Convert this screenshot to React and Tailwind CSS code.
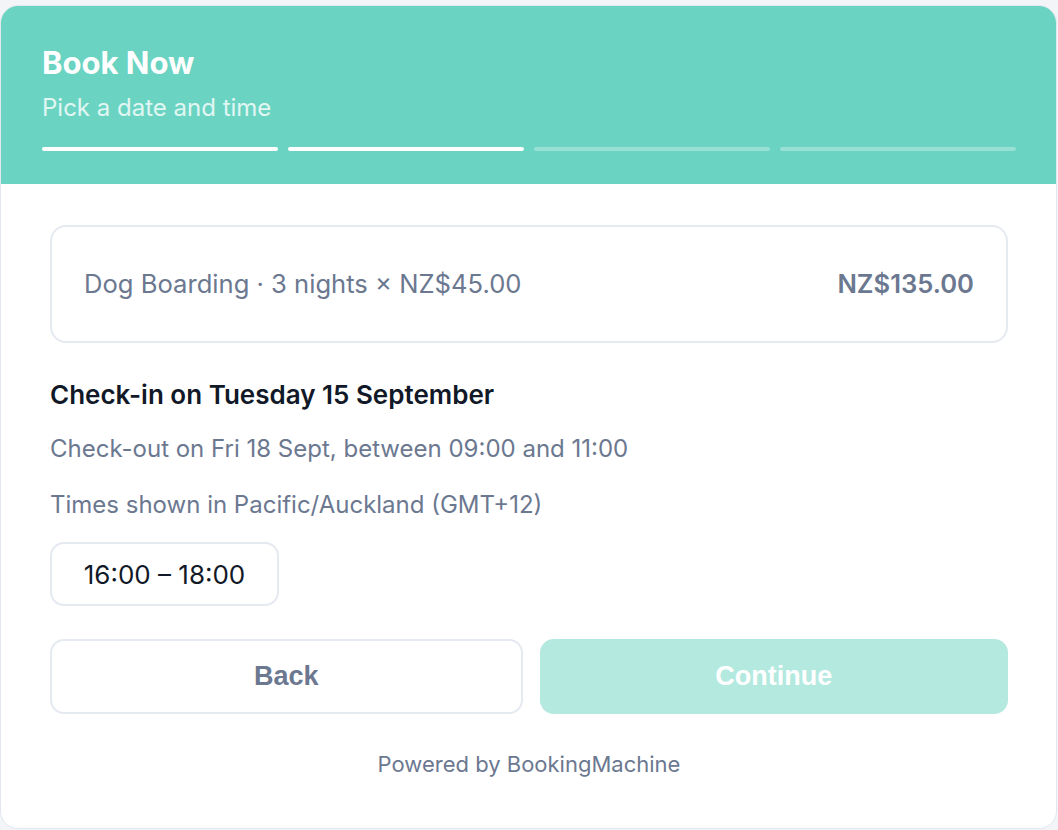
import React from 'react';

const inter = { fontFamily: 'Inter, "Noto Sans", sans-serif' };

function Steps({ done, total }) {
    // progress bars under the header
    const bars = [];
    for (let i = 0; i < total; i++) {
        bars.push(
            <div key={i} className={i < done ? "h-[4px] flex-1 rounded-full bg-white" : "h-[4px] flex-1 rounded-full bg-white/30"} />
        );
    }
    return <div className="mt-[24px] flex gap-[10px]">{bars}</div>;
}

export default function App() {
    return (
        <div className="min-h-screen bg-[#f3f4f7] pt-[5px]" style={inter}>
            <div className="w-[1057px] overflow-hidden rounded-[18px] border border-[#e3e7ee] bg-white">
                {/* header */}
                <div className="bg-[#6ad3c1] pl-[41px] pr-[40px] pt-[39px] pb-[33px]">
                    <h1 className="text-[31px] font-bold leading-[36px] text-white">Book Now</h1>
                    <p className="mt-[12px] text-[24px] leading-[30px] text-white/80">Pick a date and time</p>
                    <Steps done={2} total={4} />
                </div>

                {/* body */}
                <div className="pl-[49px] pr-[48px] pt-[41px] pb-[50px]">
                    <div className="flex h-[118px] items-center justify-between rounded-[16px] border-2 border-[#e5e9f0] px-[32px] text-[25.6px] text-[#6b7890]">
                        <span>Dog Boarding · 3 nights × NZ$45.00</span>
                        <span className="font-semibold">NZ$135.00</span>
                    </div>

                    <h2 className="mt-[36px] text-[26px] font-semibold leading-[32px] text-[#111827]">Check-in on Tuesday 15 September</h2>
                    <p className="mt-[23px] text-[24px] leading-[30px] text-[#6b7890]">Check-out on Fri 18 Sept, between 09:00 and 11:00</p>
                    <p className="mt-[26px] text-[24px] leading-[30px] text-[#6b7890]">Times shown in Pacific/Auckland (GMT+12)</p>

                    <button className="mt-[22px] flex h-[64px] w-[229px] items-center justify-center rounded-[14px] border-2 border-[#e5e9f0] bg-white text-[26px] text-[#111827]">
                        16:00 – 18:00
                    </button>

                    <div className="mt-[33px] flex gap-[17px]" style={{ fontFamily: '"Liberation Sans", Arial, sans-serif' }}>
                        <button className="flex h-[75px] flex-1 items-center justify-center rounded-[14px] border-2 border-[#e5e9f0] bg-white text-[27px] font-bold text-[#6b7890]">
                            Back
                        </button>
                        <button className="flex h-[75px] flex-1 items-center justify-center rounded-[14px] bg-[#b3e9df] text-[27px] font-bold text-white">
                            Continue
                        </button>
                    </div>

                    <p className="mt-[36px] text-center text-[22px] leading-[28px] text-[#6b7890]">Powered by BookingMachine</p>
                </div>
            </div>
        </div>
    );
}
